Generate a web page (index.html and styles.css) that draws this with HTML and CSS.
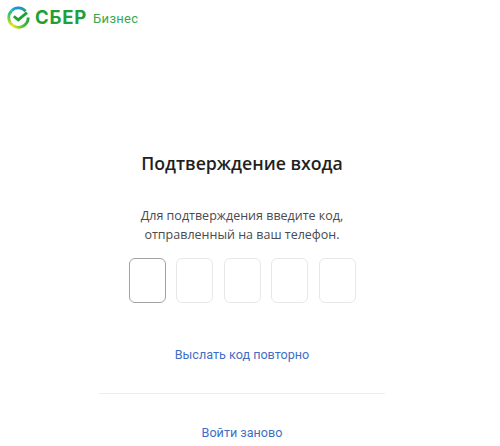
FILE: index.html
```html
<!DOCTYPE html>
<html lang="ru">
<head>
  <meta charset="UTF-8">
  <meta name="viewport" content="width=device-width, initial-scale=1.0">
  <title>Подтверждение входа</title>
  <link rel="stylesheet" href="styles.css">
</head>
<body>
  <header class="top">
    <svg class="logo-mark" width="23" height="23" viewBox="0 0 23 23" fill="none" stroke-width="2.8">
      <defs>
        <linearGradient id="ring-top" x1="19" y1="4" x2="3" y2="8" gradientUnits="userSpaceOnUse">
          <stop offset="0" stop-color="#1fa67a"/>
          <stop offset="0.5" stop-color="#1c8fe0"/>
          <stop offset="1" stop-color="#22c4c8"/>
        </linearGradient>
        <linearGradient id="ring-left" x1="3" y1="7" x2="6" y2="20" gradientUnits="userSpaceOnUse">
          <stop offset="0" stop-color="#2dbf7a"/>
          <stop offset="0.5" stop-color="#8fd13f"/>
          <stop offset="1" stop-color="#f0e81a"/>
        </linearGradient>
        <linearGradient id="ring-bottom" x1="6" y1="20" x2="21" y2="11" gradientUnits="userSpaceOnUse">
          <stop offset="0" stop-color="#e6e61e"/>
          <stop offset="0.4" stop-color="#5cc23c"/>
          <stop offset="1" stop-color="#21a038"/>
        </linearGradient>
      </defs>
      <path d="M18.6 5.2A9.7 9.7 0 0 0 4.6 4.7" stroke="url(#ring-top)"/>
      <path d="M4.6 4.7A9.7 9.7 0 0 0 5.8 19.4" stroke="url(#ring-left)"/>
      <path d="M5.8 19.4A9.7 9.7 0 0 0 21.2 11.5" stroke="url(#ring-bottom)"/>
      <path d="M6.8 10.2l4.4 3.7 8.8-7.2" stroke="#21a038"/>
    </svg>
    <span class="logo-name">СБЕР</span>
    <span class="logo-sub">Бизнес</span>
  </header>

  <main class="login">
    <h1>Подтверждение входа</h1>
    <p class="hint">Для подтверждения введите код,<br>отправленный на ваш телефон.</p>
    <div class="code-row">
      <input class="code-box active" type="text" maxlength="1">
      <input class="code-box" type="text" maxlength="1">
      <input class="code-box" type="text" maxlength="1">
      <input class="code-box" type="text" maxlength="1">
      <input class="code-box" type="text" maxlength="1">
    </div>
    <a class="link resend" href="#">Выслать код повторно</a>
    <div class="divider"></div>
    <a class="link" href="#">Войти заново</a>
  </main>
</body>
</html>
```

FILE: styles.css
```css
body {
  margin: 0;
  height: 446px;
  overflow: hidden;
  background-color: #fff;
  font-family: "Open Sans", "Noto Sans", sans-serif;
  color: #1f1f22;
}

.top {
  display: flex;
  align-items: center;
  height: 34px;
  padding-left: 7px;
}

.logo-mark {
  margin-right: 5px;
}

.logo-name {
  font-family: "Inter", "Roboto", sans-serif;
  font-size: 18.5px;
  font-weight: 700;
  letter-spacing: 0.8px;
  color: #21a038;
}

.logo-sub {
  margin-left: 6px;
  margin-top: 3px;
  font-family: "Roboto", sans-serif;
  font-size: 13px;
  letter-spacing: 0.3px;
  color: #38a84a;
}

.login {
  display: flex;
  flex-direction: column;
  align-items: center;
  padding-right: 16px;
}

h1 {
  margin: 116px 0 0;
  font-size: 17.7px;
  line-height: 26px;
  font-weight: 600;
}

.hint {
  margin: 30px 0 0;
  font-size: 12.5px;
  line-height: 19px;
  text-align: center;
  color: #4a4a4f;
}

.code-row {
  display: flex;
  gap: 10.5px;
  margin-top: 14px;
}

.code-box {
  box-sizing: border-box;
  width: 37px;
  height: 45px;
  padding: 0;
  border: 1.5px solid #e6e8ea;
  border-radius: 6px;
  background: #fff;
  outline: none;
}

.code-box.active {
  border-color: #a0a3a6;
}

.link {
  font-family: "Roboto", sans-serif;
  font-size: 12.6px;
  line-height: 18px;
  color: #3f6fc4;
  text-decoration: none;
}

.resend {
  margin-top: 43px;
}

.divider {
  width: 286px;
  height: 1px;
  margin: 29px 0 30px;
  background-color: #ededed;
}
```
